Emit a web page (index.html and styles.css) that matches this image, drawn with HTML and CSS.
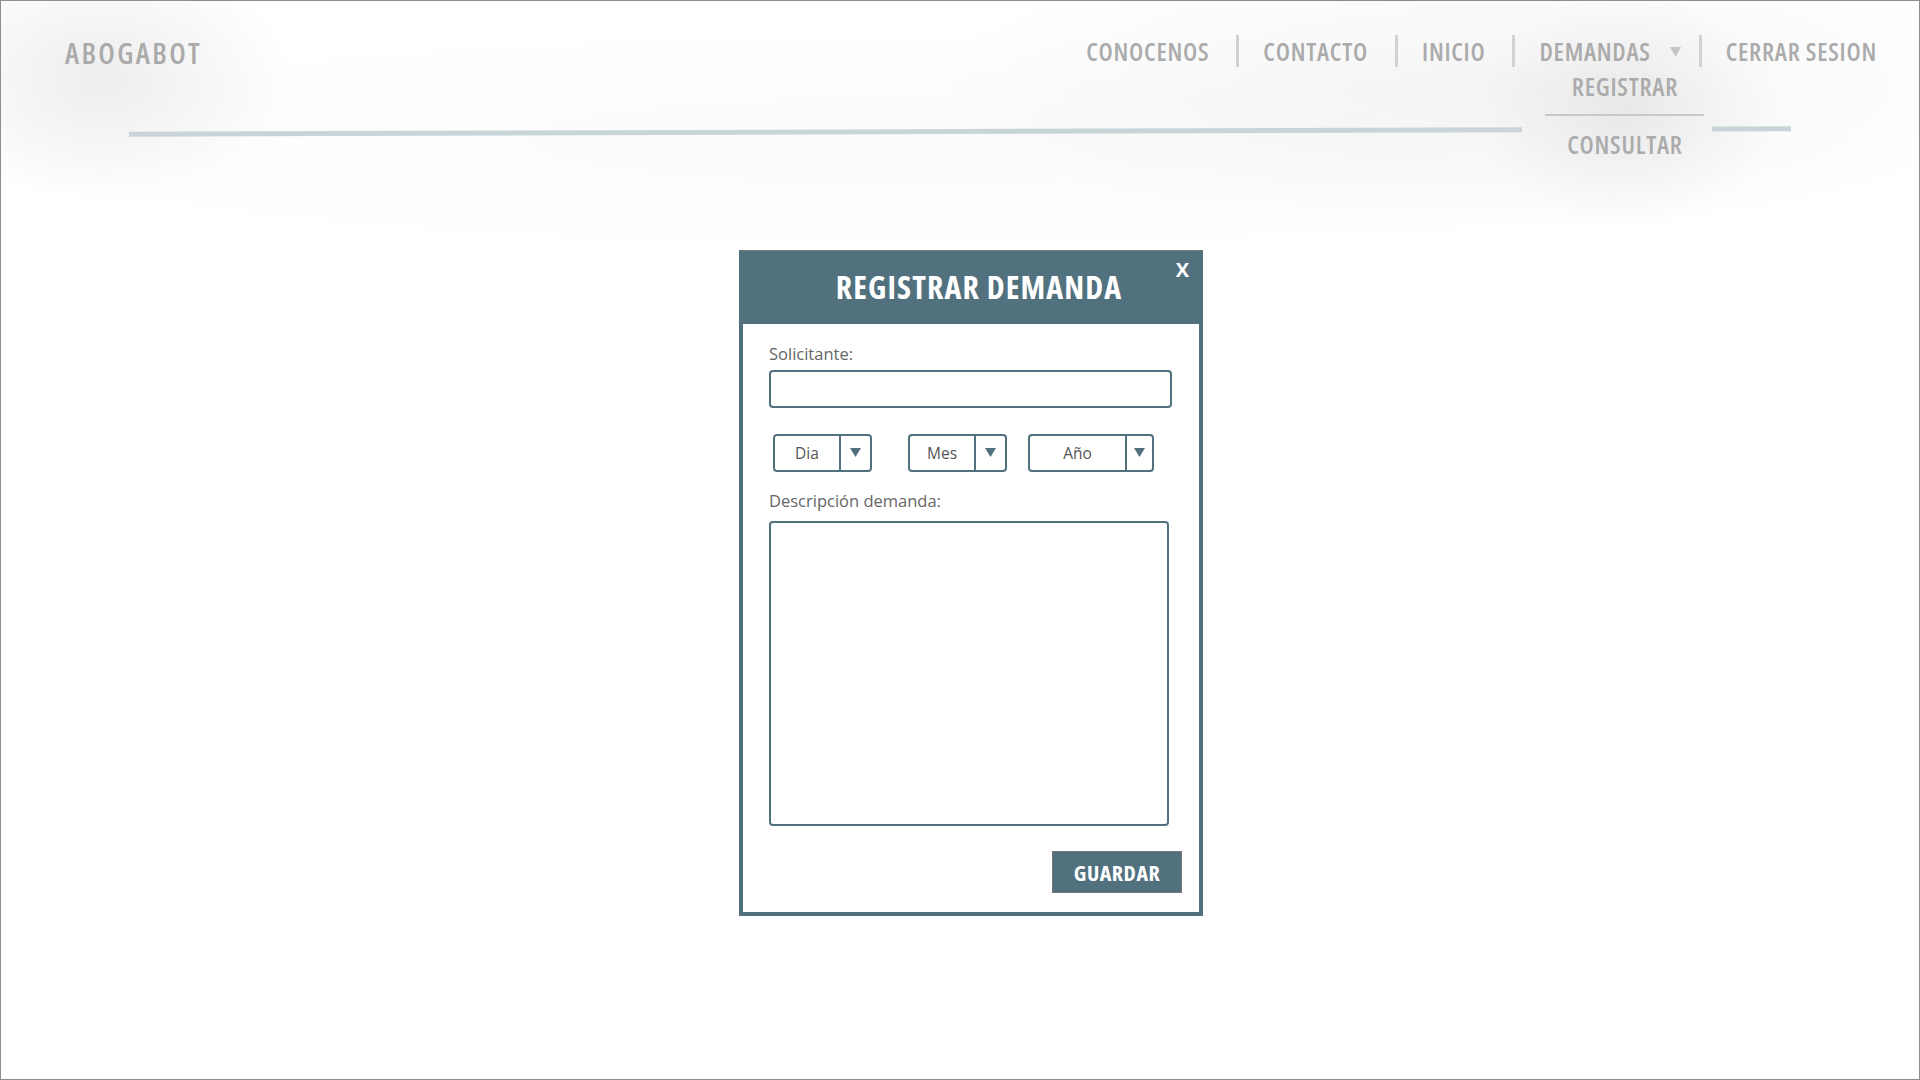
FILE: index.html
```html
<!DOCTYPE html>
<html lang="es">
<head>
<meta charset="utf-8">
<title>Abogabot - Registrar demanda</title>
<link rel="stylesheet" href="styles.css">
</head>
<body>
<div class="page">
  <header class="header">
    <div class="topbar">
      <div class="logo">ABOGABOT</div>
      <nav class="nav">
        <a class="nav-item">CONOCENOS</a>
        <span class="sep"></span>
        <a class="nav-item">CONTACTO</a>
        <span class="sep"></span>
        <a class="nav-item">INICIO</a>
        <span class="sep"></span>
        <div class="nav-item dd">
          <span>DEMANDAS</span>
          <svg class="caret" width="11" height="10" viewBox="0 0 11 10"><polygon points="0,0 11,0 5.5,10" /></svg>
          <div class="dropdown">
            <div class="dd-item">REGISTRAR</div>
            <div class="dd-line"></div>
            <div class="dd-item">CONSULTAR</div>
          </div>
        </div>
        <span class="sep"></span>
        <a class="nav-item">CERRAR SESION</a>
      </nav>
    </div>
    <div class="rule"><span class="rule-a"></span><span class="rule-b"></span></div>
  </header>

  <main class="main">
    <section class="modal">
      <div class="modal-head">
        <h1 class="modal-title">REGISTRAR DEMANDA</h1>
        <span class="close">X</span>
      </div>
      <form class="modal-body">
        <label class="label">Solicitante:</label>
        <div class="input"></div>

        <div class="dates">
          <div class="select s-dia">
            <span class="val">Dia</span>
            <span class="arrow"><svg width="11" height="9" viewBox="0 0 11 9"><polygon points="0,0 11,0 5.5,9" /></svg></span>
          </div>
          <div class="select s-mes">
            <span class="val">Mes</span>
            <span class="arrow"><svg width="11" height="9" viewBox="0 0 11 9"><polygon points="0,0 11,0 5.5,9" /></svg></span>
          </div>
          <div class="select s-anio">
            <span class="val">Año</span>
            <span class="arrow"><svg width="11" height="9" viewBox="0 0 11 9"><polygon points="0,0 11,0 5.5,9" /></svg></span>
          </div>
        </div>

        <label class="label label-desc">Descripción demanda:</label>
        <div class="textarea"></div>

        <div class="actions">
          <button type="button" class="btn">GUARDAR</button>
        </div>
      </form>
    </section>
  </main>
</div>
</body>
</html>
```
FILE: styles.css
```css
* { box-sizing: border-box; }

html, body {
  margin: 0;
  padding: 0;
  background: #ffffff;
}

body {
  font-family: "Open Sans", "Noto Sans", sans-serif;
}

.page {
  width: 1920px;
  height: 1080px;
  border: 1px solid #8e8e8e;
  background: #ffffff;
  overflow: hidden;
  display: flex;
  flex-direction: column;
}

/* ---------- header ---------- */
.header {
  height: 249px;
  flex: none;
  background:
    radial-gradient(ellipse 190px 125px at 100px 75px, rgba(0,0,0,0.07), rgba(0,0,0,0) 100%),
    radial-gradient(ellipse 150px 120px at 1625px 110px, rgba(0,0,0,0.06), rgba(0,0,0,0) 100%),
    radial-gradient(ellipse 560px 150px at 1480px 85px, rgba(0,0,0,0.04), rgba(0,0,0,0) 100%),
    radial-gradient(ellipse 1050px 120px at 900px 140px, rgba(20,40,50,0.02), rgba(0,0,0,0) 100%);
}

.topbar {
  display: flex;
  justify-content: space-between;
  align-items: flex-start;
  padding: 34px 42px 0 64px;
}

.logo {
  margin-top: 2px;
  font-size: 29px;
  line-height: 32px;
  font-weight: 600;
  font-stretch: condensed;
  letter-spacing: 2.4px;
  color: #aaaaaa;
}

.nav {
  display: flex;
  align-items: center;
}

.nav-item {
  font-size: 25px;
  line-height: 32px;
  font-weight: 600;
  font-stretch: condensed;
  letter-spacing: 0.75px;
  color: #ababab;
  text-decoration: none;
  white-space: nowrap;
}

.sep {
  width: 3px;
  height: 32px;
  background: #d2d2d2;
  margin: 0 24px 0 27px;
}

.dd {
  position: relative;
  display: flex;
  align-items: center;
}

.caret {
  margin-left: 19px;
  margin-top: 1px;
  fill: #c6c6c6;
}

.dd + .sep {
  margin-left: 18px;
}

.dropdown {
  position: absolute;
  top: 35px;
  left: 6px;
  width: 159px;
  display: flex;
  flex-direction: column;
  align-items: stretch;
  text-align: center;
}

.dd-item {
  font-size: 25px;
  line-height: 32px;
  font-weight: 600;
  font-stretch: condensed;
  letter-spacing: 0.75px;
  color: #ababab;
}

.dd-line {
  height: 2px;
  background: #c8c8c8;
  margin: 12px 0 12px;
}

.rule {
  display: flex;
  margin: 60px 0 0 128px;
  width: 1662px;
  height: 5px;
  transform: rotate(-0.19deg);
}

.rule-a {
  width: 1393px;
  height: 5px;
  background: #c9d4d9;
}

.rule-b {
  width: 79px;
  height: 5px;
  margin-left: 190px;
  background: #c9d4d9;
}

/* ---------- modal ---------- */
.main {
  display: flex;
  justify-content: center;
  align-items: flex-start;
  padding-left: 22px;
}

.modal {
  width: 464px;
  border: 4px solid #52717f;
  border-top: 1px solid #7a7a7a;
  background: #ffffff;
}

.modal-head {
  position: relative;
  height: 73px;
  background: #52717f;
  display: flex;
  align-items: center;
  justify-content: center;
  padding: 0 0 0 16px;
  margin: 0 -4px;
}

.modal-title {
  margin: 0;
  margin-top: -2px;
  font-size: 32px;
  line-height: 40px;
  font-weight: 700;
  font-stretch: condensed;
  letter-spacing: 1.1px;
  color: #ffffff;
}

.close {
  position: absolute;
  top: 6px;
  right: 14px;
  font-size: 20px;
  line-height: 26px;
  font-weight: 700;
  color: #ffffff;
}

.modal-body {
  margin: 0;
  padding: 20px 17px 19px 26px;
  display: flex;
  flex-direction: column;
}

.label {
  display: block;
  font-size: 16.5px;
  line-height: 20px;
  color: #666666;
}

.input {
  margin-top: 6px;
  width: 403px;
  height: 38px;
  border: 2px solid #52717f;
  border-radius: 4px;
  background: #ffffff;
}

.dates {
  display: flex;
  margin: 26px 0 0 4px;
}

.select {
  display: flex;
  height: 38px;
  border: 2px solid #52717f;
  border-radius: 4px;
  background: #ffffff;
}

.s-dia { width: 99px; }
.s-mes { width: 99px; margin-left: 36px; }
.s-anio { width: 126px; margin-left: 21px; }

.val {
  flex: 1;
  display: flex;
  align-items: center;
  justify-content: center;
  font-size: 15.5px;
  color: #555555;
  border-right: 2px solid #52717f;
}

.arrow {
  width: 29px;
  display: flex;
  align-items: center;
  justify-content: center;
  padding-bottom: 2px;
}

.s-anio .arrow { width: 25px; }

.arrow svg { fill: #52717f; }

.label-desc {
  margin-top: 19px;
}

.textarea {
  margin-top: 10px;
  width: 400px;
  height: 305px;
  border: 2px solid #52717f;
  border-radius: 4px;
  background: #ffffff;
}

.actions {
  display: flex;
  justify-content: flex-end;
  margin-top: 25px;
}

.btn {
  width: 130px;
  height: 42px;
  padding: 0;
  border: 1px solid #777777;
  background: #52717f;
  color: #ffffff;
  font-family: "Open Sans", "Noto Sans", sans-serif;
  font-size: 22px;
  font-weight: 700;
  font-stretch: condensed;
  letter-spacing: 0.5px;
  cursor: pointer;
}
```
